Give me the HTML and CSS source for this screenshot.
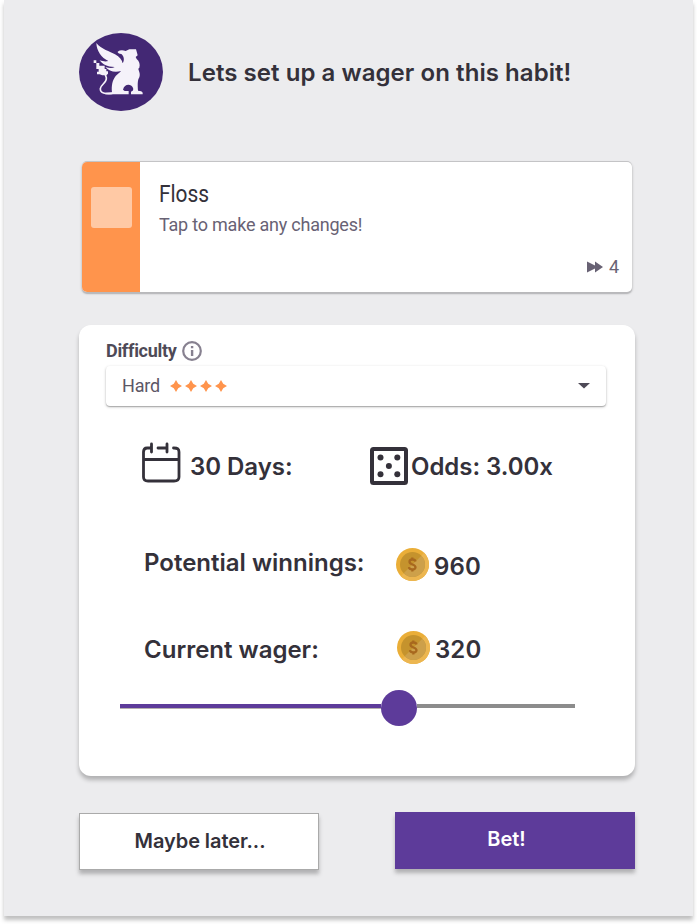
FILE: index.html
```html
<!DOCTYPE html>
<html lang="en">
<head>
<meta charset="utf-8">
<title>Habit wager</title>
<link rel="stylesheet" href="styles.css">
</head>
<body>
<main class="panel">
  <header class="header">
    <svg class="logo" viewBox="27 24 252 234" preserveAspectRatio="none">
      <ellipse cx="153" cy="141" rx="126" ry="117" fill="#432874"/>
      <path fill="#f5f2fa" d="M79 54C94 73 120 79 135 88C149 96 156 104 158 115C165 104 161 93 154 87C148 86 142 83 143 80C150 75 158 75 167 78L178 73H198L201 83L203 91L197 96L200 102C208 108 211 119 208 128L205 131C206 138 212 145 208 157C202 166 203 181 204 197Q216 197 218 203V208H183V200Q190 199 190 192C186 175 163 175 159 194L164 198H176V208H106V203L126 202C124 182 127 166 137 153C144 147 149 143 153 138C134 143 117 139 106 126C119 130 128 130 134 126C111 126 96 117 89 106C101 110 108 110 115 108C94 98 80 78 79 54Z"/>
      <path fill="none" stroke="#f5f2fa" stroke-width="5" d="M127 205C106 207 90 205 91 191C92 178 111 174 109 158L106 149"/>
      <path fill="#f5f2fa" d="M71 106h8v8h-8zM79 114h9v8h16v10h5v7h5v7l-5 5h-12l-8-3h-8v-8h5v-8h-7z"/>
    </svg>
    <h1 class="title">Lets set up a wager on this habit!</h1>
  </header>

  <section class="task">
    <div class="task-side"><span class="checkbox"></span></div>
    <div class="task-body">
      <h2 class="task-name">Floss</h2>
      <p class="task-note">Tap to make any changes!</p>
      <div class="streak">
        <svg width="16" height="12" viewBox="0 0 16 12"><path fill="#686274" d="M0 .5L8 4.500V.5L16 6L8 11.500V7.500L0 11.500Z"/></svg>
        <span>4</span>
      </div>
    </div>
  </section>

  <section class="card">
    <div class="label"><span class="label-text">Difficulty</span>
      <svg width="20" height="20" viewBox="0 0 20 20"><circle cx="10" cy="10" r="8.8" fill="none" stroke="#878190" stroke-width="2.2"/><path fill="#878190" d="M8.900 5h2.400v2.200H8.900zM8.900 9h2.400v6H8.900z"/></svg>
    </div>
    <div class="select">
      <span class="select-text">Hard</span>
      <svg class="stars" width="58" height="12" viewBox="0 0 58 12">
        <defs><path id="star" fill="#ff944c" d="M6 0L8.200 3.800L12 6L8.200 8.200L6 12L3.800 8.200L0 6L3.800 3.800Z"/></defs>
        <use href="#star"/><use href="#star" x="15"/><use href="#star" x="30"/><use href="#star" x="45"/>
      </svg>
      <svg class="caret" width="12" height="6" viewBox="0 0 12 6"><path fill="#4e4a57" d="M0 0H12L6 5.5Z"/></svg>
    </div>
    <div class="facts">
      <div class="fact days">
        <svg width="40" height="42" viewBox="0 0 40 42" fill="none" stroke="#34313a" stroke-width="2.8" stroke-linecap="round" stroke-linejoin="round"><path d="M9 6H6Q2.5 6 2.5 10V35Q2.5 39 7 39H33Q38 39 38 35V10Q38 6 33 6H32.500M17 6H26M10.500 2V10M26 2V10M2.500 17.500H38"/></svg>
        <span>30 Days:</span>
      </div>
      <div class="fact odds">
        <svg width="38" height="38" viewBox="0 0 38 38"><rect x="2" y="2" width="34" height="34" rx="1.500" fill="none" stroke="#34313a" stroke-width="4"/><g fill="#34313a"><circle cx="10.500" cy="10.500" r="3"/><circle cx="27.300" cy="10.500" r="3"/><circle cx="18.900" cy="18.900" r="3"/><circle cx="10.500" cy="27.300" r="3"/><circle cx="27.300" cy="27.300" r="3"/></g></svg>
        <span>Odds: 3.00x</span>
      </div>
    </div>
    <div class="amount winnings">
      <span class="amount-label">Potential winnings:</span>
      <svg class="coin" width="33" height="33" viewBox="0 0 33 33">
        <defs><g id="coin"><circle cx="16.500" cy="16.500" r="16.500" fill="#eaae38"/><path fill="#ecb650" d="M28.200 4.800A16.500 16.500 0 0 1 4.800 28.200Z"/><circle cx="16.500" cy="16.500" r="12.500" fill="#c5932d"/><path fill="#cda04a" d="M25.340 7.660A12.500 12.500 0 0 1 7.660 25.340Z"/><path fill="none" stroke="#a8681e" stroke-width="2.300" d="M19.500 13.500C19 10.800 13.500 10.800 13.500 13.800C13.500 17 19.500 16 19.500 19.300C19.500 22.200 13.300 22.200 13 19.200M16.300 9.500V12M16.300 21V23.500"/></g></defs>
        <use href="#coin"/>
      </svg>
      <span class="amount-value">960</span>
    </div>
    <div class="amount wager">
      <span class="amount-label">Current wager:</span>
      <svg class="coin" width="33" height="33" viewBox="0 0 33 33"><use href="#coin"/></svg>
      <span class="amount-value">320</span>
    </div>
    <div class="slider">
      <span class="slider-fill"></span><span class="knob"></span><span class="slider-rest"></span>
    </div>
  </section>

  <footer class="actions">
    <button class="btn later">Maybe later...</button>
    <button class="btn bet">Bet!</button>
  </footer>
</main>
</body>
</html>
```
FILE: styles.css
```css
* { box-sizing: border-box; }
body { margin: 0; height: 924px; background: #fff; color: #34313a; font-family: Inter, sans-serif; overflow: hidden; }
h1, h2, p { margin: 0; }
svg { display: block; flex: none; }
.panel { width: 689px; height: 916px; margin: 0 4px; padding: 33px 0 0 75px; background: #ececee; box-shadow: 0 4px 4px rgba(0,0,0,.25); }

.header { display: flex; align-items: center; height: 78px; gap: 25px; }
.logo { width: 84px; height: 78px; }
.title { padding-top: 2px; font-size: 24px; line-height: 30px; font-weight: 600; letter-spacing: .06px; white-space: nowrap; }

.task { display: flex; width: 550px; height: 130px; margin: 51px 0 0 3px; border-radius: 5px; background: #fff; overflow: hidden; box-shadow: 0 -1px 0 #c4c4c6, 0 2px 1px #b9b9bb, 0 1px 3px rgba(0,0,0,.25); font-family: Roboto, sans-serif; }
.task-side { width: 58px; padding: 25px 0 0 9px; background: #ff944c; }
.checkbox { display: block; width: 41px; height: 41px; border-radius: 3px; background: #ffc9a5; }
.task-body { flex: 1; padding: 17px 13px 0 19px; }
.task-name { font-size: 24px; line-height: 30px; font-weight: 400; color: #34313a; transform: scaleX(.87); transform-origin: left; }
.task-note { margin-top: 3px; font-size: 18px; line-height: 26px; letter-spacing: -.22px; color: #686274; white-space: nowrap; }
.streak { display: flex; justify-content: flex-end; align-items: center; gap: 6px; margin-top: 17px; font-size: 18px; line-height: 24px; color: #686274; }

.card { width: 556px; height: 451px; margin-top: 33px; padding: 16px 27px 0; border-radius: 12px; background: #fff; box-shadow: 0 4px 4px rgba(0,0,0,.25); }
.label { display: flex; align-items: center; gap: 5px; height: 20px; font: 700 18px/20px Roboto, sans-serif; letter-spacing: -.3px; color: #4e4a57; }
.select { display: flex; align-items: center; width: 500px; height: 40px; margin-top: 5px; padding: 0 16px; border-radius: 4px; box-shadow: 0 1px 3px rgba(0,0,0,.24), 0 1px 1px rgba(0,0,0,.2); font: 400 18px/24px Roboto, sans-serif; letter-spacing: -.15px; color: #5c5766; }
.stars { margin-left: 10px; }
.caret { margin-left: auto; }
.facts { display: flex; height: 42px; margin-top: 36px; font-size: 24px; font-weight: 600; line-height: 30px; white-space: nowrap; }
.fact { display: flex; align-items: center; }
.days { width: 229px; margin-left: 35px; gap: 9px; }
.odds { gap: 3px; }
.days span, .odds span { padding-top: 8px; letter-spacing: -.04px; }
.odds svg { margin-top: 5px; }
.amount { display: flex; align-items: center; height: 34px; margin-left: 38px; font-size: 24px; font-weight: 600; line-height: 30px; white-space: nowrap; }
.winnings { margin-top: 63px; }
.wager { margin-top: 49px; }
.amount-label { width: 252px; }
.amount-value { margin-left: 5px; padding-top: 5px; letter-spacing: .1px; }
.winnings .amount-label { padding-bottom: 2px; }
.wager .amount-label { width: 253px; padding-top: 5px; }
.slider { display: flex; align-items: center; width: 455px; height: 36px; margin: 26px 0 0 14px; }
.slider-fill { width: 261px; height: 4px; margin-bottom: 4px; background: #5d3b9a; box-shadow: 0 1px 0 #b5afae; }
.knob { width: 36px; height: 36px; border-radius: 50%; background: #5d3b9a; }
.slider-rest { flex: 1; height: 4px; margin-bottom: 4px; background: #8c8c8c; }

.actions { display: flex; width: 556px; margin-top: 36px; justify-content: space-between; }
.btn { width: 240px; height: 57px; padding: 0 0 3px; border: 0; font: 600 20px/24px Inter, sans-serif; box-shadow: 0 4px 4px rgba(0,0,0,.25); }
.later { margin-top: 1px; padding: 0 0 2px 2px; border: 1px solid #aaa; background: #fff; color: #34313a; letter-spacing: -.08px; }
.bet { padding-right: 17px; background: #5d3b9a; color: #fff; }
```
